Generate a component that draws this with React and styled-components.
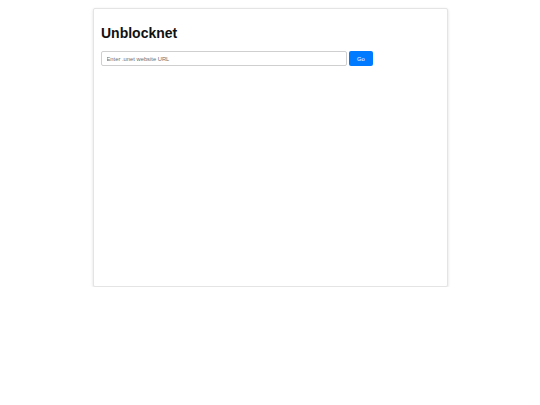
import React from "react";
import styled, { createGlobalStyle } from "styled-components";

const GlobalStyle = createGlobalStyle`
  html, body {
    margin: 0;
    padding: 0;
    background: #fff;
    font-family: "Liberation Sans", Arial, sans-serif;
  }
`;

const Card = styled.div`
  box-sizing: border-box;
  width: 355px;
  height: 279px;
  margin: 8px auto 0;
  padding: 8px 8px 8px 7.5px;
  background: #fff;
  border: 0.5px solid #e4e4e4;
  border-radius: 2px;
  box-shadow: 0 1px 3px rgba(0, 0, 0, 0.14);
`;

const Title = styled.h1`
  margin: 8px 0 9px;
  font-size: 14px;
  font-weight: bold;
  color: #111;
  line-height: 17px;
`;

const Form = styled.form`
  display: flex;
  align-items: center;
  gap: 2px;
`;

const UrlInput = styled.input`
  box-sizing: border-box;
  width: 245.5px;
  height: 15px;
  padding: 0 4.5px;
  border: 0.5px solid #cfcfcf;
  border-radius: 2px;
  font-family: "Liberation Sans", Arial, sans-serif;
  font-size: 5.8px;
  color: #333;
  outline: none;

  &::placeholder {
    color: #6e6e6e;
  }
`;

const GoButton = styled.button`
  box-sizing: border-box;
  width: 24.5px;
  height: 15px;
  padding: 0;
  border: none;
  border-radius: 2px;
  background: #007bff;
  color: #fff;
  font-family: "Liberation Sans", Arial, sans-serif;
  font-size: 5.8px;
  cursor: pointer;
`;

const App = () => {
  return (
    <>
      <GlobalStyle />
      <Card>
        <Title>Unblocknet</Title>
        <Form onSubmit={(e) => e.preventDefault()}>
          <UrlInput type="text" placeholder="Enter .unet website URL" />
          <GoButton type="submit">Go</GoButton>
        </Form>
      </Card>
    </>
  );
};

export default App;
